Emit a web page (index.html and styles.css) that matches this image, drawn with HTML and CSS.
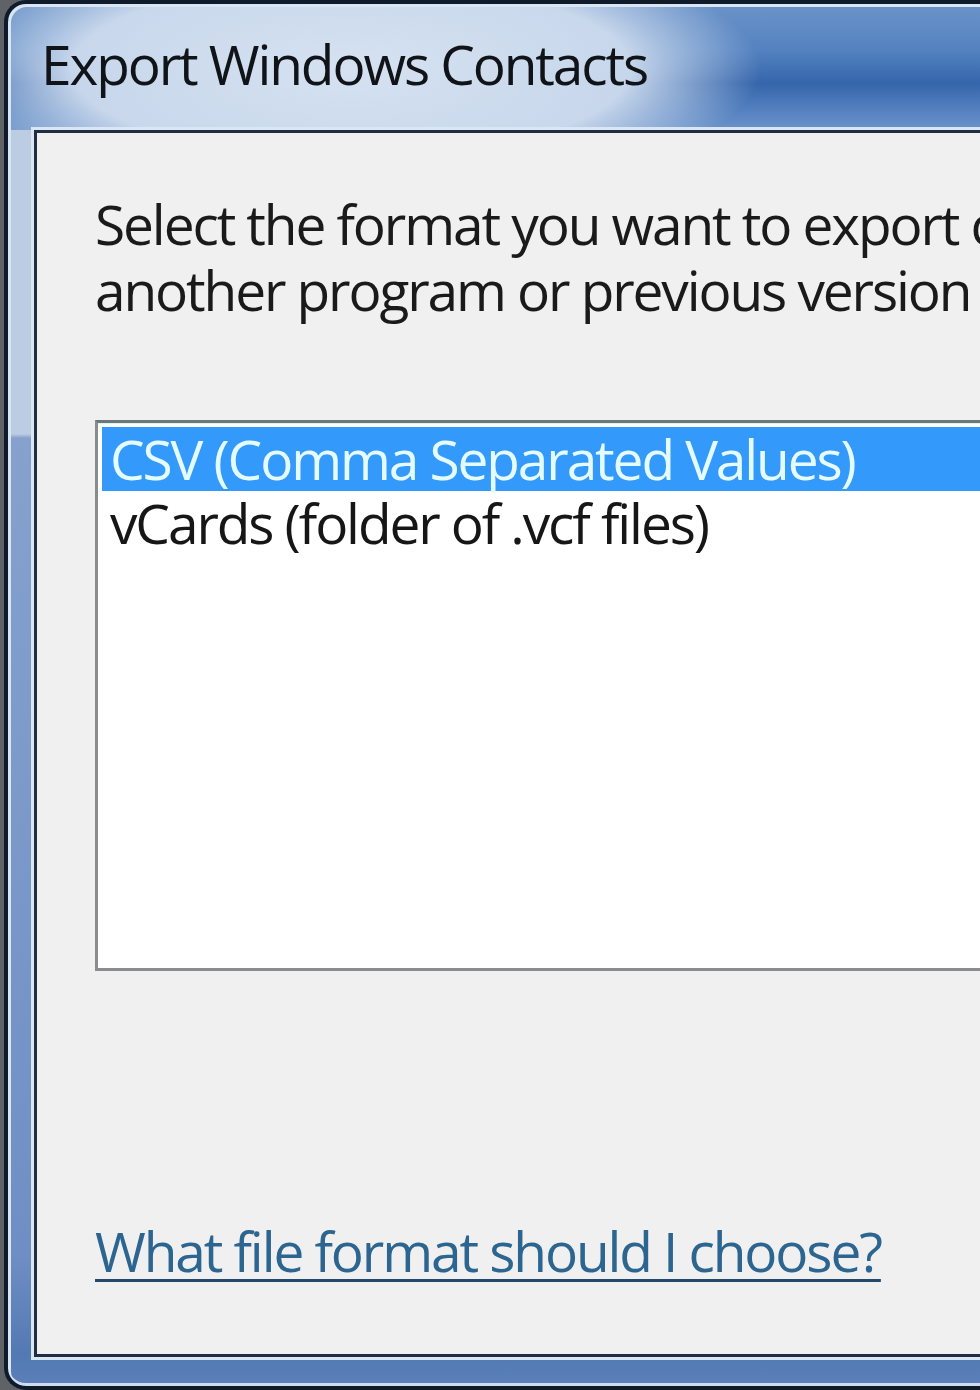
FILE: index.html
```html
<!DOCTYPE html>
<html lang="en">
<head>
<meta charset="utf-8">
<title>Export Windows Contacts</title>
<link rel="stylesheet" href="styles.css">
</head>
<body>
<div class="window">
  <div class="titlebar">
    <span class="title">Export Windows Contacts</span>
  </div>
  <div class="client">
    <p class="intro">Select the format you want to export contacts to, which can then be imported into<br>another program or previous version of Windows Contacts.</p>
    <div class="listbox">
      <div class="item selected">CSV (Comma Separated Values)</div>
      <div class="item">vCards (folder of .vcf files)</div>
    </div>
    <a class="help" href="#">What file format should I choose?</a>
  </div>
</div>
</body>
</html>
```

FILE: styles.css
```css
html, body {
  margin: 0;
  padding: 0;
}

body {
  width: 980px;
  height: 1390px;
  overflow: hidden;
  background: #5f6266;
  font-family: "Open Sans", "Noto Sans", sans-serif;
  font-size: 55px;
  letter-spacing: -2.1px;
  color: #1c1c1c;
}

.window {
  box-sizing: border-box;
  margin-left: 4px;
  width: 1200px;
  height: 1390px;
  border: 4px solid #0f1b2b;
  border-right: none;
  border-radius: 22px 0 0 22px;
  background: linear-gradient(to bottom,
    #bccde3 0, #bccde3 430px, #86a1cd 434px, #6f8fc4 1250px, #5379b2 1350px, #5b80b9 1380px);
  box-shadow: inset 3px 3px 0 0 #d9e5f3, inset 0 -3px 0 0 #cfdcee;
  padding-bottom: 29px;
  display: flex;
  flex-direction: column;
}

.titlebar {
  margin: 3px 0 0 3px;
  height: 123px;
  flex: none;
  border-top-left-radius: 16px;
  background:
    radial-gradient(ellipse 410px 130px at 340px 62px,
      rgba(214, 226, 241, 1) 0%, rgba(206, 220, 238, 0.95) 68%, rgba(200, 216, 236, 0) 100%),
    linear-gradient(to bottom, #6a92c8 0%, #5482c0 35%, #3565ab 62%, #5682c0 85%, #6e94ca 100%);
  padding: 24px 0 0 30px;
  box-sizing: border-box;
}

.title {
  display: block;
  line-height: 66px;
  color: #101418;
  white-space: nowrap;
}

.client {
  flex: 1;
  margin-left: 26px;
  border: 3px solid #1f2e42;
  border-right: none;
  box-shadow: 0 0 0 3px #dbe6f3;
  background: #f0f0f0;
  padding: 58px 0 0 58px;
  min-height: 0;
}

.intro {
  margin: 0;
  line-height: 66px;
  white-space: nowrap;
  color: #1a1a1a;
}

.listbox {
  margin-top: 97px;
  height: 551px;
  box-sizing: border-box;
  border: 3px solid #8a8d90;
  border-top-color: #6c7878;
  border-right: none;
  background: #ffffff;
  padding: 4px 0 0 4px;
  box-shadow: inset 0 1px 0 #d8f4f6;
}

.item {
  height: 64px;
  line-height: 64px;
  padding-left: 8px;
  white-space: nowrap;
  color: #161616;
}

.item.selected {
  background: #3399fb;
  color: #e4fbff;
}

.help {
  display: inline-block;
  margin-top: 247px;
  line-height: 66px;
  color: #2c6590;
  text-decoration: underline;
  text-decoration-color: #25486a;
  text-decoration-thickness: 3px;
  text-underline-offset: 7px;
  white-space: nowrap;
}
```
